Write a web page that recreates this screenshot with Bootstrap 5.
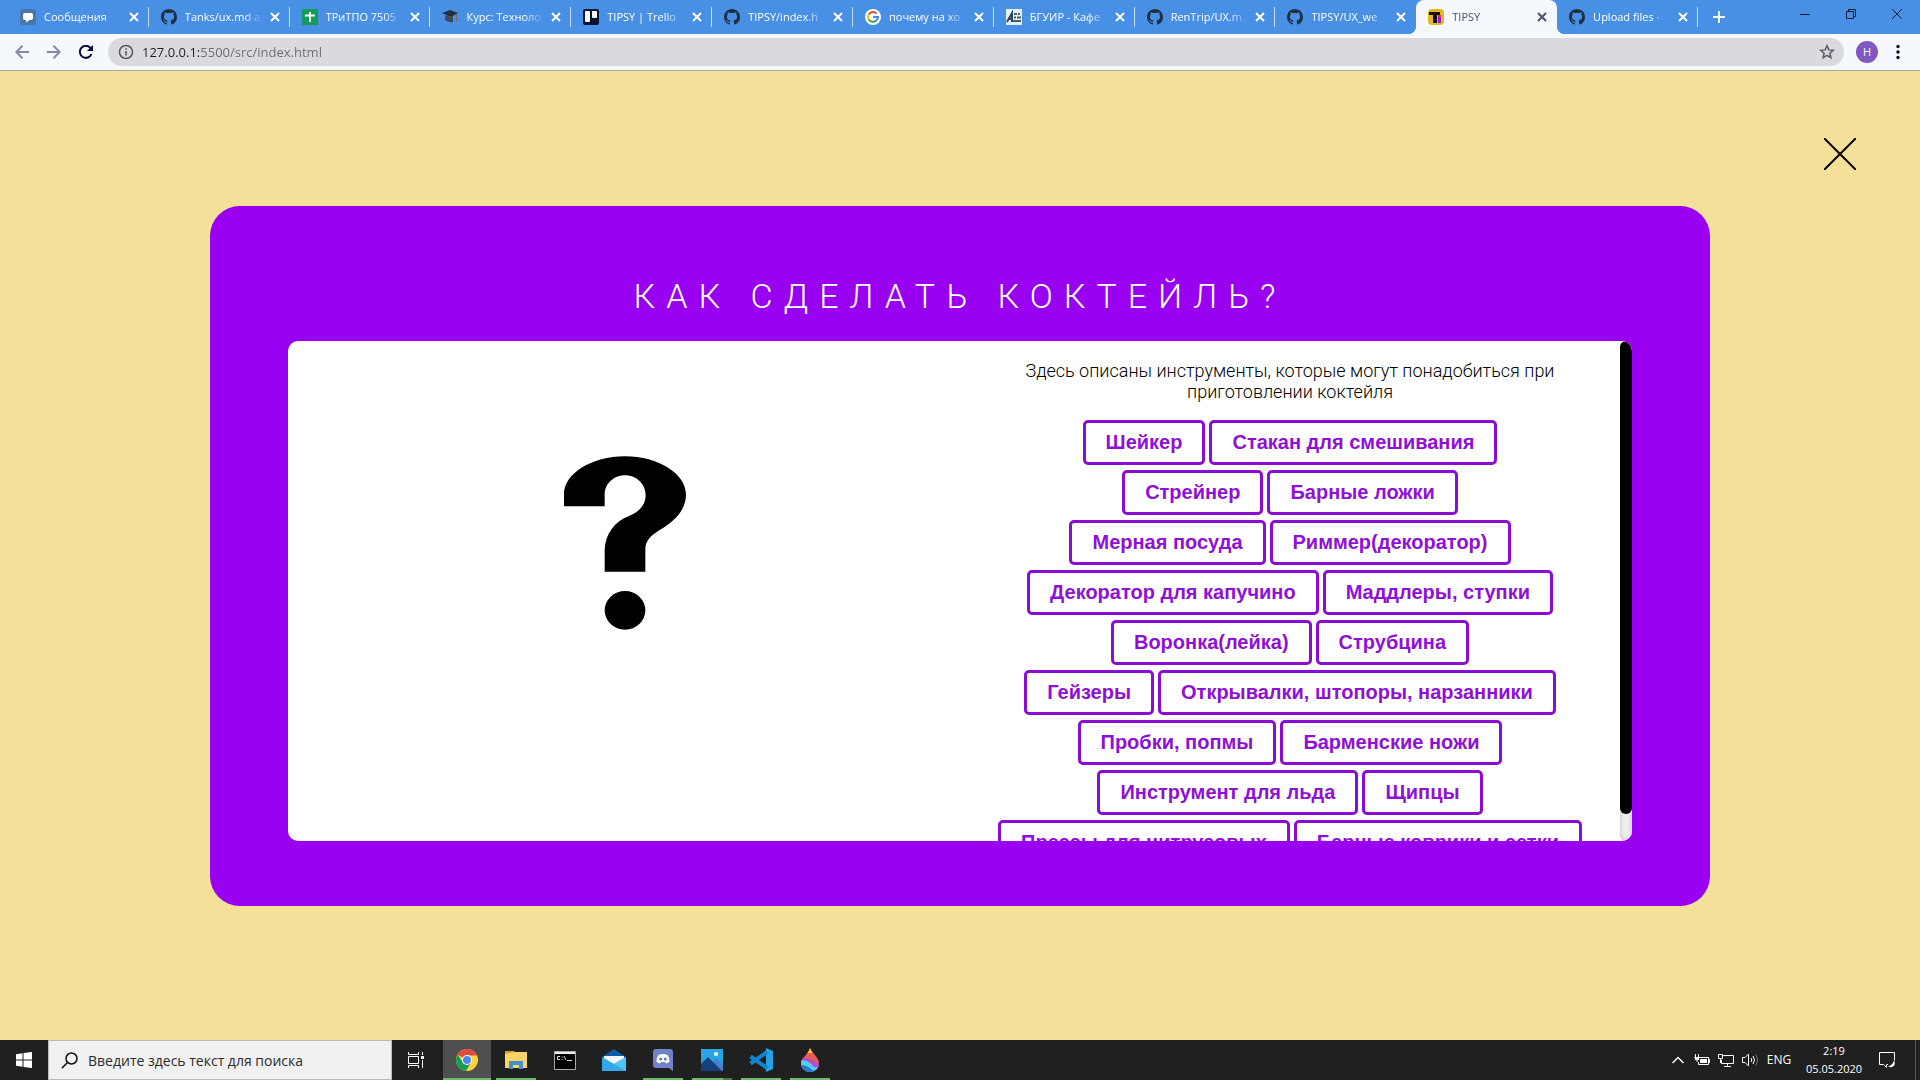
<!DOCTYPE html>
<html lang="ru">
<head>
<meta charset="utf-8">
<meta name="viewport" content="width=device-width, initial-scale=1">
<title>TIPSY</title>
<link href="https://cdn.jsdelivr.net/npm/bootstrap@5.3.0/dist/css/bootstrap.min.css" rel="stylesheet">
<style>
  body { font-family: "Open Sans", "Noto Sans", sans-serif; font-size: 12px; line-height: 16px; background: #f4e098; color: #000; }
  button { font-family: inherit; }
  svg { display: block; flex: none; }
  .bare { border: 0; background: none; padding: 0; color: inherit; display: flex; align-items: center; justify-content: center; flex: none; }

  /* tab strip */
  .strip { background: #4790e6; height: 34px; color: #fff; }
  .tabs { flex: 0 1 1698px; min-width: 0; padding-left: 8px; }
  .tab { flex: 1 1 0; min-width: 0; height: 34px; padding: 0 7px 0 12px; position: relative; font-size: 11px; }
  .tab::after { content: ""; position: absolute; right: 0; top: 7px; width: 1px; height: 20px; background: #c9e0fa; }
  .tab.before::after, .tab.current::after { display: none; }
  .tab.current { background: #f5f9fe; border-radius: 8px 8px 0 0; color: #44546a; }
  .tab.current::before { content: ""; position: absolute; left: -8px; right: -8px; bottom: 0; height: 8px;
    background: radial-gradient(circle at 0 0, transparent 8px, #f5f9fe 8px) left / 8px 8px no-repeat, radial-gradient(circle at 100% 0, transparent 8px, #f5f9fe 8px) right / 8px 8px no-repeat; }
  .tab-name { flex: 1 1 0; min-width: 0; margin-left: 8px; overflow: hidden; white-space: nowrap; color: inherit; text-decoration: none;
    -webkit-mask-image: linear-gradient(90deg, #000 calc(100% - 20px), transparent); mask-image: linear-gradient(90deg, #000 calc(100% - 20px), transparent); }
  .tab-x { width: 16px; height: 16px; margin-left: 4px; }
  .plus { width: 42px; height: 34px; }
  .win { width: 46px; height: 28px; color: #10182c; }

  /* address bar */
  .tools { background: #f5f9fe; height: 37px; border-bottom: 1px solid #a9a9a4; padding: 0 10px 0 6px; }
  .tool { width: 32px; height: 32px; color: #8a88a8; }
  .omni { height: 28px; border-radius: 14px; background: #d9dadf; margin: 0 4px 0 6px; padding: 0 9px 0 10px; color: #55585e; }
  .omni input { border: 0; outline: 0; padding: 0; margin-left: 8px; font-size: 13px; height: 28px; font-family: "Open Sans", "Noto Sans", sans-serif; color: #5f6368;
    background: linear-gradient(90deg, #202124 57px, #6a6c70 57px); -webkit-background-clip: text; background-clip: text; -webkit-text-fill-color: transparent; }
  .avatar { width: 22px; height: 22px; border-radius: 50%; background: #7e57c2; color: #fff; font-size: 11px; }

  /* page */
  .closer { padding: 67px 64px 36px; }
  .panel { width: 100%; max-width: 1500px; background: #9800ef; border-radius: 30px; padding: 66px 78px 65px; }
  .panel h1 { font: 300 34px/48px Roboto, sans-serif; letter-spacing: 11px; color: #fff; margin: 0 0 21px; text-transform: uppercase; }
  .sheet { background: #fff; border-radius: 10px; height: 500px; overflow: hidden; }
  .pic { padding: 115px 0 0 2px; }
  .list { height: 500px; overflow-y: auto; scrollbar-width: none; padding: 19px 30px 0; }
  .list::-webkit-scrollbar { display: none; }
  .list p { font: 300 18px/21px Roboto, sans-serif; margin: 0 0 18px; }
  .pairs { gap: 5px; }
  .rail { width: 12px; flex: none; background: #efefef; border-radius: 6px; box-shadow: inset 0 0 5px #bbb; }
  .thumb { height: 473px; background: #000; border-radius: 6px; }
  .pill { border: 3px solid #8b0cd3; border-radius: 5px; background: #fff; color: #8f10d8; font: 700 20px/23px "Liberation Sans", Arial, sans-serif; padding: 8px 20px; white-space: nowrap; }

  /* taskbar */
  .task { background: #202020; height: 40px; color: #fff; }
  .start { width: 48px; height: 40px; }
  .find { width: 344px; height: 40px; background: #f1f1f1; border: 1px solid #bbb; padding-left: 12px; color: #222; }
  .find input { flex: 1; min-width: 0; border: 0; outline: 0; background: none; padding: 0; margin-left: 10px; font: 14px "Open Sans", "Noto Sans", sans-serif; }
  .find input::placeholder { color: #2b2b2b; opacity: 1; }
  .app { width: 49px; height: 40px; position: relative; padding-right: 2px; }
  .app.view { width: 51px; padding-right: 4px; }
  .app.open::after { content: ""; position: absolute; left: 4px; right: 5px; bottom: 0; height: 2px; background: #6cbc69; }
  .app.front { background: #4f4f4f; background-clip: content-box; padding-right: 1px; }
  .app.front::after { left: 0; right: 1px; }
  .app.many::after { background: linear-gradient(90deg, #6cbc69 31px, #4a7f48 31px); }
  .tray { width: 24px; height: 40px; }
  .lang { width: 34px; }
  .clock { width: 68px; line-height: 18px; font-size: 11px; margin: 0 4px; }
  .note { width: 30px; }
  .peek { width: 5px; height: 40px; border-left: 1px solid #5a5a5a; margin-left: 13px; }
</style>
<script src="https://cdn.jsdelivr.net/npm/bootstrap@5.3.0/dist/js/bootstrap.bundle.min.js"></script>
</head>
<body class="d-flex flex-column min-vh-100">

<svg width="0" height="0" class="position-absolute" aria-hidden="true">
  <symbol id="cat" viewBox="0 0 16 16"><path fill="#1f2f42" d="M8 0C3.58 0 0 3.58 0 8c0 3.54 2.29 6.53 5.47 7.59.4.07.55-.17.55-.38 0-.19-.01-.82-.01-1.49-2.01.37-2.53-.49-2.69-.94-.09-.23-.48-.94-.82-1.13-.28-.15-.68-.52-.01-.53.63-.01 1.08.58 1.23.82.72 1.21 1.87.87 2.33.66.07-.52.28-.87.51-1.07-1.78-.2-3.64-.89-3.64-3.95 0-.87.31-1.59.82-2.15-.08-.2-.36-1.02.08-2.12 0 0 .67-.21 2.2.82a7.6 7.6 0 0 1 4 0c1.53-1.04 2.2-.82 2.2-.82.44 1.1.16 1.92.08 2.12.51.56.82 1.27.82 2.15 0 3.07-1.87 3.75-3.65 3.95.29.25.54.73.54 1.48 0 1.07-.01 1.93-.01 2.2 0 .21.15.46.55.38A8.01 8.01 0 0 0 16 8c0-4.42-3.58-8-8-8z"/></symbol>
  <symbol id="ex" viewBox="0 0 16 16"><path d="M4 4l8 8M12 4l-8 8" stroke="currentColor" stroke-width="2" fill="none"/></symbol>
</svg>

<header>
  <div class="strip d-flex">
    <nav class="tabs d-flex" aria-label="Вкладки">
      <div class="tab d-flex align-items-center"><svg width="16" height="16"><rect width="16" height="16" rx="3" fill="#4a76a8"/><path d="M5 4h6q2 0 2 2v3q0 2-2 2H9.500l-3.500 2.500V11H5q-2 0-2-2V6q0-2 2-2z" fill="#fff"/></svg><a class="tab-name" href="#">Сообщения</a><button class="bare tab-x" aria-label="Закрыть"><svg width="16" height="16"><use href="#ex"/></svg></button></div>
      <div class="tab d-flex align-items-center"><svg width="16" height="16"><use href="#cat"/></svg><a class="tab-name" href="#">Tanks/ux.md a</a><button class="bare tab-x" aria-label="Закрыть"><svg width="16" height="16"><use href="#ex"/></svg></button></div>
      <div class="tab d-flex align-items-center"><svg width="16" height="16"><rect width="16" height="16" rx="1" fill="#139b58"/><path d="M3 6.500h10M8 3v10" stroke="#fff" stroke-width="2"/></svg><a class="tab-name" href="#">ТРиТПО 7505</a><button class="bare tab-x" aria-label="Закрыть"><svg width="16" height="16"><use href="#ex"/></svg></button></div>
      <div class="tab d-flex align-items-center"><svg width="16" height="16"><path d="M0 4l8-3 8 3-7 4z" fill="#26313f"/><path d="M3 6v5q4 3 8 2V7L9 8z" fill="#3e4b5b"/><path d="M14.500 5v8" stroke="#7a6a55" stroke-width="1"/></svg><a class="tab-name" href="#">Курс: Техноло</a><button class="bare tab-x" aria-label="Закрыть"><svg width="16" height="16"><use href="#ex"/></svg></button></div>
      <div class="tab d-flex align-items-center"><svg width="16" height="16"><rect width="16" height="16" rx="2" fill="#091530"/><rect x="2" y="2" width="5" height="11" rx="1" fill="#fff"/><rect x="9" y="2" width="5" height="7" rx="1" fill="#fff"/></svg><a class="tab-name" href="#">TIPSY | Trello</a><button class="bare tab-x" aria-label="Закрыть"><svg width="16" height="16"><use href="#ex"/></svg></button></div>
      <div class="tab d-flex align-items-center"><svg width="16" height="16"><use href="#cat"/></svg><a class="tab-name" href="#">TIPSY/index.h</a><button class="bare tab-x" aria-label="Закрыть"><svg width="16" height="16"><use href="#ex"/></svg></button></div>
      <div class="tab d-flex align-items-center"><svg width="16" height="16" fill="none" stroke-width="2"><circle cx="8" cy="8" r="8" fill="#fff"/><path d="M11.500 4.500A5 5 0 0 0 3.700 5.500" stroke="#ea4335"/><path d="M3.700 5.500a5 5 0 0 0 0 5" stroke="#fbbc05"/><path d="M3.700 10.500a5 5 0 0 0 7.600 1" stroke="#34a853"/><path d="M11.300 11.500A5 5 0 0 0 13 8H8" stroke="#4285f4"/></svg><a class="tab-name" href="#">почему на хо</a><button class="bare tab-x" aria-label="Закрыть"><svg width="16" height="16"><use href="#ex"/></svg></button></div>
      <div class="tab d-flex align-items-center"><svg width="16" height="16"><rect width="16" height="16" fill="#e2f1f7"/><path d="M1 13L6 4v9M3 10h3" stroke="#33454f" stroke-width="2" fill="none"/><path d="M8 5h3M12 5h2M8 8.500h2M11 8.500h4M7 12h8" stroke="#4c5f69" stroke-width="2" fill="none"/></svg><a class="tab-name" href="#">БГУИР - Кафе</a><button class="bare tab-x" aria-label="Закрыть"><svg width="16" height="16"><use href="#ex"/></svg></button></div>
      <div class="tab d-flex align-items-center"><svg width="16" height="16"><use href="#cat"/></svg><a class="tab-name" href="#">RenTrip/UX.m</a><button class="bare tab-x" aria-label="Закрыть"><svg width="16" height="16"><use href="#ex"/></svg></button></div>
      <div class="tab before d-flex align-items-center"><svg width="16" height="16"><use href="#cat"/></svg><a class="tab-name" href="#">TIPSY/UX_we</a><button class="bare tab-x" aria-label="Закрыть"><svg width="16" height="16"><use href="#ex"/></svg></button></div>
      <div class="tab current d-flex align-items-center"><svg width="16" height="16"><rect width="16" height="16" rx="4" fill="#e3b71e"/><path d="M1 3h11v3H9v8H5V6H1z" fill="#111"/><path d="M10 8h3v6h-3z" fill="#a413d8"/><path d="M10 6h3v2h-3z" fill="#d33"/></svg><a class="tab-name" href="#" aria-current="page">TIPSY</a><button class="bare tab-x" aria-label="Закрыть"><svg width="16" height="16"><use href="#ex"/></svg></button></div>
      <div class="tab d-flex align-items-center"><svg width="16" height="16"><use href="#cat"/></svg><a class="tab-name" href="#">Upload files ·</a><button class="bare tab-x" aria-label="Закрыть"><svg width="16" height="16"><use href="#ex"/></svg></button></div>
    </nav>
    <button class="bare plus" aria-label="Новая вкладка"><svg width="12" height="12"><path d="M6 0v12M0 6h12" stroke="#fff" stroke-width="2"/></svg></button>
    <div class="d-flex ms-auto">
      <button class="bare win" aria-label="Свернуть"><svg width="10" height="10"><path d="M0 5.500h10" stroke="currentColor"/></svg></button>
      <button class="bare win" aria-label="Окно"><svg width="10" height="10" fill="none" stroke="currentColor"><path d="M.5 2.500h7v7h-7zM2.500 2.500v-2h7v7h-2"/></svg></button>
      <button class="bare win" aria-label="Закрыть окно"><svg width="10" height="10"><path d="M0 0l10 10M10 0L0 10" stroke="currentColor"/></svg></button>
    </div>
  </div>
  <div class="tools d-flex align-items-center">
    <button class="bare tool" aria-label="Назад"><svg width="14" height="14" fill="none" stroke="currentColor" stroke-width="2"><path d="M14 7H1M7.500.8L1.300 7l6.200 6.200"/></svg></button>
    <button class="bare tool" aria-label="Вперёд"><svg width="14" height="14" fill="none" stroke="currentColor" stroke-width="2"><path d="M0 7h13M6.500.8L12.700 7l-6.200 6.200"/></svg></button>
    <button class="bare tool" aria-label="Обновить"><svg width="14" height="14" fill="none" stroke="#0b0840" stroke-width="2"><path d="M12.500 9A6 6 0 1 1 11.500 3"/><path d="M14 0v6H8z" fill="#0b0840" stroke="none"/></svg></button>
    <div class="omni d-flex align-items-center flex-grow-1">
      <svg width="16" height="16" fill="none" stroke="currentColor"><circle cx="8" cy="8" r="6.500" stroke-width="1.500"/><path d="M8 7v4.500M8 4.200v1.600" stroke-width="1.600"/></svg>
      <input class="flex-grow-1" type="text" aria-label="Адрес" value="127.0.0.1:5500/src/index.html">
      <button class="bare" aria-label="В закладки"><svg width="16" height="16" fill="none" stroke="#5a5a66" stroke-width="1.500"><path d="M8 1.800l1.800 4.100 4.400.4-3.300 2.900 1 4.400L8 11.300l-3.900 2.300 1-4.400-3.300-2.900 4.400-.4z"/></svg></button>
    </div>
    <button class="bare" aria-label="Профиль"><span class="avatar d-flex align-items-center justify-content-center ms-2">Н</span></button>
    <button class="bare ms-2" aria-label="Меню"><svg width="24" height="16" fill="#0b0820"><circle cx="12" cy="2.500" r="1.700"/><circle cx="12" cy="8" r="1.700"/><circle cx="12" cy="13.500" r="1.700"/></svg></button>
  </div>
</header>

<main class="flex-grow-1">
  <div class="closer d-flex justify-content-end">
    <button class="bare" aria-label="Закрыть страницу"><svg width="32" height="32"><path d="M0 0l32 32M32 0L0 32" stroke="#000" stroke-width="2"/></svg></button>
  </div>
  <section class="panel mx-auto">
    <h1 class="text-center">Как сделать коктейль?</h1>
    <div class="sheet d-flex">
      <div class="pic w-50 d-flex justify-content-center align-items-start">
        <svg width="122" height="174" viewBox="73 77 366 520" role="img" aria-label="Вопрос"><path d="M73 227V190C73 130 155 77 256 77C357 77 439 130 439 192C439 240 400 275 360 298C335 313 317 330 317 356V423H195V357C197 310 225 272 268 256C300 243 318 222 318 194C318 160 290 134 256 134C222 134 195 160 195 192V227Z"/><ellipse cx="256" cy="539" rx="61" ry="58"/></svg>
      </div>
      <div class="list flex-fill text-center">
        <p>Здесь описаны инструменты, которые могут понадобиться при<br>приготовлении коктейля</p>
        <div class="pairs d-flex flex-column">
          <div class="d-flex justify-content-center gap-1"><button class="pill">Шейкер</button><button class="pill">Стакан для смешивания</button></div>
          <div class="d-flex justify-content-center gap-1"><button class="pill">Стрейнер</button><button class="pill">Барные ложки</button></div>
          <div class="d-flex justify-content-center gap-1"><button class="pill">Мерная посуда</button><button class="pill">Риммер(декоратор)</button></div>
          <div class="d-flex justify-content-center gap-1"><button class="pill">Декоратор для капучино</button><button class="pill">Маддлеры, ступки</button></div>
          <div class="d-flex justify-content-center gap-1"><button class="pill">Воронка(лейка)</button><button class="pill">Струбцина</button></div>
          <div class="d-flex justify-content-center gap-1"><button class="pill">Гейзеры</button><button class="pill">Открывалки, штопоры, нарзанники</button></div>
          <div class="d-flex justify-content-center gap-1"><button class="pill">Пробки, попмы</button><button class="pill">Барменские ножи</button></div>
          <div class="d-flex justify-content-center gap-1"><button class="pill">Инструмент для льда</button><button class="pill">Щипцы</button></div>
          <div class="d-flex justify-content-center gap-1"><button class="pill">Прессы для цитрусовых</button><button class="pill">Барные коврики и сетки</button></div>
        </div>
      </div>
      <div class="rail"><div class="thumb"></div></div>
    </div>
  </section>
</main>

<footer class="task d-flex align-items-center">
  <button class="bare start" aria-label="Пуск"><svg width="16" height="16" fill="#fff"><path d="M0 2.200L6.500 1.300V7.500H0zM7.500 1.100L16 0v7.500H7.500zM0 8.500h6.500v6.200L0 13.800zM7.500 8.500H16V16l-8.500-1.100z"/></svg></button>
  <label class="find d-flex align-items-center">
    <svg width="17" height="17" fill="none" stroke="#111" stroke-width="1.500"><circle cx="10.500" cy="6.500" r="5.500"/><path d="M6.600 10.400L.8 16.200"/></svg>
    <input type="text" placeholder="Введите здесь текст для поиска" aria-label="Поиск">
  </label>
  <button class="bare app view" aria-label="Представление задач"><svg width="16" height="16" fill="none" stroke="#fff"><path d="M.5 4.500h10v7H.5zM.5 0v2.500h10V0M.5 16v-2.500h10V16M14.500 0v3M14.500 8v8"/><path d="M13 4h3v3h-3z" fill="#fff" stroke="none"/></svg></button>
  <button class="bare app open front" aria-label="Chrome"><svg width="22" height="22"><circle cx="11" cy="11" r="11" fill="#fdd23f"/><path d="M11 11L1.500 5.500A11 11 0 0 1 20.500 5.500L21 6.500H11z" fill="#dd4b3e"/><path d="M1.500 5.500A11 11 0 0 0 10 22L15 13.500 11 11 7 13.500z" fill="#179c55"/><circle cx="11" cy="11" r="5" fill="#fff"/><circle cx="11" cy="11" r="4" fill="#4b89ee"/></svg></button>
  <button class="bare app open" aria-label="Проводник"><svg width="22" height="20"><path d="M0 1h9l2 3H0z" fill="#dd9a1d"/><path d="M0 4l10-2h12v16H0z" fill="#fbd467"/><path d="M4 19v-8h14v8h-4v-4H8v4z" fill="#3f92cf"/></svg></button>
  <button class="bare app" aria-label="Командная строка"><svg width="22" height="19"><path d="M.5.5h21v18H.5z" fill="#000" stroke="#a8a8a8"/><path d="M1 1h20v2H1z" fill="#eee"/><path d="M6 5.500H3.500v3H6M8 5.500v1M8 8v1M10 5l2 4M13 9.500h5" stroke="#ddd" fill="none"/></svg></button>
  <button class="bare app" aria-label="Почта"><svg width="24" height="22"><path d="M0 8l12-8 12 8v6H0z" fill="#0d5ba8"/><path d="M2 7h20v8H2z" fill="#f3f7fb"/><path d="M0 8l12 7L24 8v14H0z" fill="#2fa9ec"/><path d="M24 8v14L12 15z" fill="#52c3f7"/></svg></button>
  <button class="bare app open" aria-label="Discord"><svg width="20" height="22"><path d="M3 0h14q3 0 3 3v19l-4-3H3q-3 0-3-3V3q0-3 3-3z" fill="#7182c6"/><path d="M5.500 6q4.500-2 9 0Q17 9 16.500 13L13 14.500l-1-1.500H8l-1 1.500L3.500 13Q3 9 5.500 6z" fill="#fff"/><circle cx="7.700" cy="10" r="1.500" fill="#6071b8"/><circle cx="12.300" cy="10" r="1.500" fill="#6071b8"/></svg></button>
  <button class="bare app open many" aria-label="Фотографии"><svg width="22" height="22"><path d="M0 0h22v22H0z" fill="#27a5e5"/><path d="M10 14l5-5 7 7v6H10z" fill="#477fd2"/><path d="M0 15l7-7 14 14H0z" fill="#153f7d"/><circle cx="15" cy="5" r="2" fill="#fff"/></svg></button>
  <button class="bare app open" aria-label="VS Code"><svg width="24" height="24"><path d="M17 0l7 3v18l-7 3z" fill="#27a0e8"/><path d="M1.500 8.500L18 20M1.500 15.500L18 4" stroke="#1383cc" stroke-width="4"/></svg></button>
  <button class="bare app open" aria-label="Paint 3D"><svg width="20" height="24"><defs><clipPath id="drop"><path d="M10 0C12 6 19 9 19 15.500A9 8.500 0 0 1 1 15.500C1 10 8 7 10 0z"/></clipPath></defs><g clip-path="url(#drop)"><path d="M0 0h20v24H0z" fill="#ee5a58"/><path d="M7 0h8v5H7z" fill="#ffc41f"/><path d="M0 9q7 0 20 7V24H0z" fill="#b14fc8"/><path d="M0 12q9 0 12 5t8 0v7H0z" fill="#58cdf4"/><path d="M0 17q7 0 11 4t9-2v5H0z" fill="#2378ce"/></g></svg></button>

  <div class="d-flex align-items-center ms-auto">
    <button class="bare tray" aria-label="Скрытые значки"><svg width="12" height="8" fill="none" stroke="#fff" stroke-width="1.500"><path d="M.5 7L6 1.500 11.500 7"/></svg></button>
    <button class="bare tray" aria-label="Батарея"><svg width="16" height="12" fill="none" stroke="#fff"><path d="M5 3.500h9.500v7H4.500V8M15.500 5v4M1.500 0v3M4.500 0v3M0 3.500h6M3 4v4"/><path d="M1 3h4v3H1zM6 5h7v4H6z" fill="#fff" stroke="none"/></svg></button>
    <button class="bare tray" aria-label="Сеть"><svg width="16" height="13" fill="none" stroke="#fff"><path d="M5 1.500h10.500v8h-12V6M9.500 10v2.500M6 12.500h7M.5.500h4v4h-4zM2.500 4.500V9"/></svg></button>
    <button class="bare tray" aria-label="Громкость"><svg width="17" height="14" fill="none" stroke="#fff"><path d="M.5 4.500H3l3.500-3.500v12L3 9.500H.5zM9 5q1.500 2 0 4M11 3q3 4 0 8"/><path d="M13.500 1.500q4 5.500 0 11" stroke="#777"/></svg></button>
    <button class="bare lang">ENG</button>
    <button class="bare clock">2:19<br>05.05.2020</button>
    <button class="bare note" aria-label="Уведомления"><svg width="17" height="17" fill="none" stroke="#fff"><path d="M9 12.500H7.500v3l-3-3h-4V.500h15v8"/><path d="M15 8.500q2 4-1 6-3 1.500-5-.5 4 0 6-5.500z" fill="#fff" stroke="none"/></svg></button>
    <div class="peek"></div>
  </div>
</footer>
</body>
</html>
